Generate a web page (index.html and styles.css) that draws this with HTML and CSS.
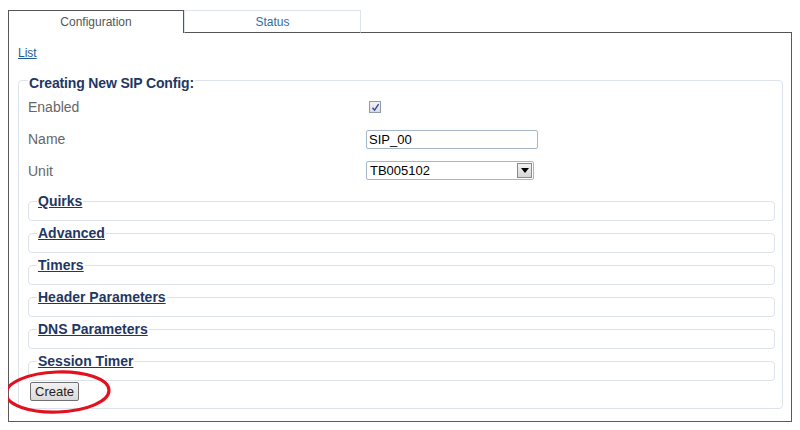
FILE: index.html
```html
<!DOCTYPE html>
<html lang="en">

<head>
    <meta charset="UTF-8">
    <meta name="viewport" content="width=device-width, initial-scale=1.0">
    <title>SIP Config</title>
    <link rel="stylesheet" href="styles.css">
</head>

<body>
    <div class="tabs">
        <div class="tab active">Configuration</div>
        <div class="tab">Status</div>
        <div class="tab-fill"></div>
    </div>

    <div class="panel">
        <a href="#" class="list-link">List</a>

        <fieldset class="main">
            <legend>Creating New SIP Config:</legend>

            <div class="row">
                <span class="label">Enabled</span>
                <span class="check">
                    <svg width="9" height="9" viewBox="0 0 9 9">
                        <path d="M1.5 4.8 L3.6 7.2 L7.6 1.2" fill="none" stroke="#2b4d9c" stroke-width="1.4" />
                    </svg>
                </span>
            </div>
            <div class="row">
                <span class="label">Name</span>
                <input type="text" class="text-input" value="SIP_00">
            </div>
            <div class="row">
                <span class="label">Unit</span>
                <div class="select">
                    <span>TB005102</span>
                    <span class="select-btn">
                        <svg width="8" height="5" viewBox="0 0 8 5">
                            <path d="M0 0 H8 L4 5 Z" fill="#000" />
                        </svg>
                    </span>
                </div>
            </div>

            <fieldset class="sub"><legend><a href="#">Quirks</a></legend></fieldset>
            <fieldset class="sub"><legend><a href="#">Advanced</a></legend></fieldset>
            <fieldset class="sub"><legend><a href="#">Timers</a></legend></fieldset>
            <fieldset class="sub"><legend><a href="#">Header Parameters</a></legend></fieldset>
            <fieldset class="sub"><legend><a href="#">DNS Parameters</a></legend></fieldset>
            <fieldset class="sub"><legend><a href="#">Session Timer</a></legend></fieldset>

            <button class="create">Create</button>
        </fieldset>
    </div>

    <!-- hand drawn annotation -->
    <svg class="circle" width="112" height="46" viewBox="0 0 112 46">
        <ellipse cx="55.5" cy="22" rx="51.5" ry="20" fill="none" stroke="#e3101f" stroke-width="3.2"
            transform="rotate(-2 55.5 22)" />
    </svg>
</body>

</html>
```

FILE: styles.css
```css
body {
    margin: 10px 8px 8px;
    font-family: "Liberation Sans", Arial, sans-serif;
    background: #fff;
    position: relative;
}

.tabs {
    display: flex;
    height: 23px;
}

.tab {
    width: 177px;
    box-sizing: border-box;
    text-align: center;
    font-size: 12px;
    line-height: 22px;
    color: #2f6ea6;
    border: 1px solid #dfe4ea;
    border-bottom: 1px solid #555;
}

.tab.active {
    width: 176px;
    color: #555;
    border: 1px solid #555;
    border-bottom: none;
}

.tab-fill {
    flex: 1;
    border-bottom: 1px solid #555;
}

.panel {
    border: 1px solid #5a5a5a;
    border-top: none;
    box-shadow: 1px 1px 0 #b0b0b0;
    padding: 10px 8px 12px 9px;
}

.list-link {
    display: inline-block;
    font-size: 12px;
    line-height: 14px;
    color: #1f5a93;
    margin-bottom: 10px;
}

fieldset {
    margin: 0;
    border: 1px solid #dce3ea;
    border-radius: 4px;
}

fieldset.main {
    padding: 0 7px 7px 9px;
}

fieldset.main>legend {
    padding: 5px 1px 0;
    font-size: 14px;
    line-height: 16px;
    font-weight: bold;
    letter-spacing: -0.15px;
    color: #1f3764;
}

.row {
    display: flex;
    align-items: center;
    height: 32px;
}

.row:nth-of-type(3) {
    height: 31px;
}

.label {
    width: 338px;
    font-size: 14px;
    color: #666;
}

.check {
    display: flex;
    align-items: center;
    justify-content: center;
    width: 10px;
    height: 10px;
    margin-left: 3px;
    border: 1px solid #8e9aa8;
    background: linear-gradient(#f4f4f4, #dcdcdc);
}

.text-input {
    width: 172px;
    height: 19px;
    box-sizing: border-box;
    margin: 0;
    padding: 0 2px;
    font-family: "Liberation Sans", Arial, sans-serif;
    font-size: 13px;
    color: #000;
    border: 1px solid #a6b6c9;
    border-radius: 2px;
}

.select {
    display: flex;
    align-items: center;
    justify-content: space-between;
    width: 168px;
    height: 19px;
    box-sizing: border-box;
    padding: 0 1px 0 3px;
    font-size: 13px;
    border: 1px solid #a6b6c9;
    border-radius: 2px;
}

.select-btn {
    display: flex;
    align-items: center;
    justify-content: center;
    width: 15px;
    height: 15px;
    box-sizing: border-box;
    border: 1px solid #8a8a8a;
    background: linear-gradient(#f2f2f2, #d6d6d6);
}

fieldset.sub {
    margin-top: 4px;
    padding: 0 8px 11px;
}

fieldset.sub:first-of-type {
    margin-top: 7px;
}

fieldset.sub legend {
    padding: 0 1px;
    font-size: 14px;
    line-height: 16px;
    font-weight: bold;
}

fieldset.sub legend a {
    color: #1f3764;
}

.create {
    display: block;
    margin: 1px 0 0 2px;
    height: 19px;
    padding: 0 4px;
    font-family: "Liberation Sans", Arial, sans-serif;
    font-size: 13px;
    color: #222;
    border: 1px solid #707070;
    border-radius: 2px;
    background: linear-gradient(#f2f2f2, #dadada);
}

.circle {
    position: absolute;
    left: -6px;
    top: 360px;
}
```
